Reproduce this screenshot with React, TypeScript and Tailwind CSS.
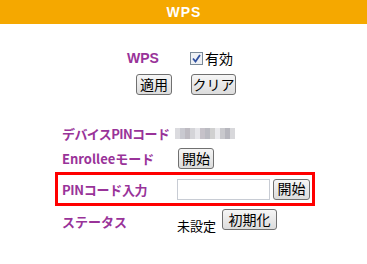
import React from "react";

const jp = { fontFamily: '"Noto Sans CJK JP", "Noto Sans", sans-serif' };
const lab = "text-[#993399] font-bold text-[13px] leading-none whitespace-nowrap";

function Btn({ children, w }: { children: React.ReactNode; w: string }) {
  return (
    <button
      className={`${w} h-[21px] rounded-[3px] border border-[#707070] bg-gradient-to-b from-[#f6f6f6] to-[#dcdcdc] text-[14px] leading-none text-black flex items-center justify-center pb-[2px] whitespace-nowrap`}
      style={jp}
    >
      {children}
    </button>
  );
}

const pinCols = ["#d8d8dc", "#c4c4cc", "#b8b4bc", "#d0d0d4", "#e4e4e8", "#c0bcc4", "#b4b4bc", "#cccccc", "#e8e8ec", "#c4c4c8", "#b0b0b8", "#d4d4d8"];

export default function App() {
  return (
    <div className="w-[367px] h-[264px] bg-white relative overflow-hidden" style={jp}>
      <div className="h-[24px] bg-[#f5a800] flex items-center justify-center">
        <span className="text-white font-bold text-[14px] tracking-[1px] pl-[1px]" style={{ fontFamily: '"Liberation Sans", Arial, sans-serif' }}>WPS</span>
      </div>
      <div className="flex items-center mt-[27px] h-[14px]">
        <span className={`${lab} ml-[127px] text-[14px]`} style={{ fontFamily: '"Liberation Sans", Arial, sans-serif' }}>WPS</span>
        <span className="ml-[31px] w-[13px] h-[13px] border border-[#7a8a99] bg-[#eef1f5] flex items-center justify-center">
          <svg width="9" height="9" viewBox="0 0 9 9"><path d="M1 4.5 L3.5 7.5 L8 1" stroke="#3050a0" strokeWidth="1.8" fill="none" /></svg>
        </span>
        <span className="ml-[2px] text-[14px] leading-none text-black">有効</span>
      </div>
      <div className="flex mt-[9px]">
        <div className="ml-[136px]"><Btn w="w-[36px]">適用</Btn></div>
        <div className="ml-[19px]"><Btn w="w-[45px]">クリア</Btn></div>
      </div>
      <div className="flex items-center mt-[32px] h-[12px]">
        <span className={`${lab} ml-[62px] w-[113px] tracking-[-0.6px]`}>デバイスPINコード</span>
        <div className="flex h-[11px] opacity-90">
          {pinCols.map((c, i) => (
            <div key={i} className="w-[5px] h-[11px]" style={{ background: c }} />
          ))}
        </div>
      </div>
      <div className="flex items-center mt-[9px] h-[21px]">
        <span className={`${lab} ml-[62px] w-[116px]`}>Enrolleeモード</span>
        <Btn w="w-[36px]">開始</Btn>
      </div>
      <div className="ml-[55px] mt-[3px] w-[260px] h-[34px] border-[3px] border-[#ff0000] flex items-center">
        <span className={`${lab} ml-[4px] w-[115px] tracking-[-0.3px]`}>PINコード入力</span>
        <div className="w-[93px] h-[21px] border border-[#c8ccd4] bg-white" />
        <div className="ml-[3px]"><Btn w="w-[37px]">開始</Btn></div>
      </div>
      <div className="flex mt-[3px]">
        <span className={`${lab} ml-[62px] w-[115px] pt-[6px]`}>ステータス</span>
        <span className="text-[13px] leading-none text-black mt-[10px]">未設定</span>
        <div className="ml-[6px]"><Btn w="w-[55px]">初期化</Btn></div>
      </div>
    </div>
  );
}
